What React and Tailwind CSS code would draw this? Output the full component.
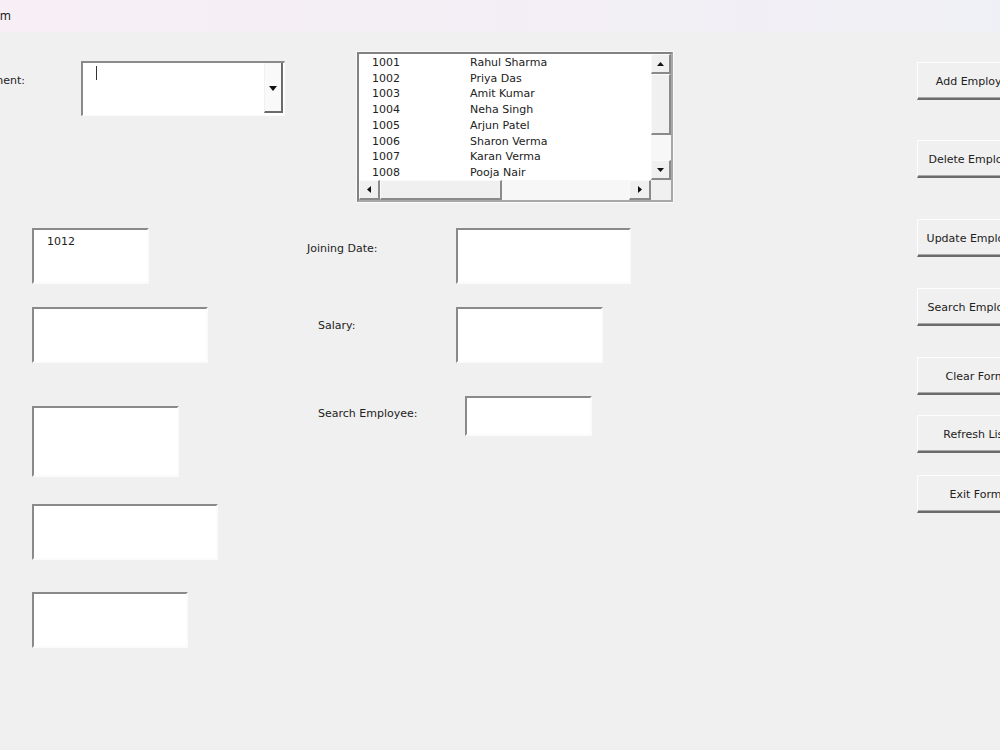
import React from "react";

const font = { fontFamily: '"DejaVu Sans", "Liberation Sans", sans-serif' };

function TextBox({ w, h, children, className = "" }) {
  return (
    <div
      className={`bg-white border-t-2 border-l-2 border-t-[#8a8a8a] border-l-[#8a8a8a] border-b-2 border-r-2 border-b-[#fbfbfb] border-r-[#fbfbfb] shrink-0 ${className}`}
      style={{ width: w, height: h }}
    >
      {children}
    </div>
  );
}

function Btn({ label, mt }) {
  return (
    <div
      className="w-[116px] h-[38px] shrink-0 flex items-center justify-center pt-[3px] bg-[#f0f0f0] border-t border-l border-t-[#fdfdfd] border-l-[#fdfdfd] border-b-2 border-r-2 border-b-[#6b6b6b] border-r-[#6b6b6b] shadow-[inset_-1px_-1px_0_#a8a8a8] text-[11px] text-[#222] whitespace-nowrap"
      style={{ marginTop: mt }}
    >
      <span className="pl-[2px]">{label}</span>
    </div>
  );
}

function ScrollBtn({ children, className = "" }) {
  return (
    <div
      className={`bg-[#f0f0f0] border-t border-l border-t-[#fafafa] border-l-[#fafafa] border-b-2 border-r-2 border-b-[#8a8a8a] border-r-[#8a8a8a] flex items-center justify-center shrink-0 ${className}`}
    >
      {children}
    </div>
  );
}

const Up = () => (
  <svg width="7" height="4" viewBox="0 0 7 4"><path d="M0 4 L3.5 0 L7 4 Z" fill="#111" /></svg>
);
const Down = () => (
  <svg width="7" height="4" viewBox="0 0 7 4"><path d="M0 0 L3.5 4 L7 0 Z" fill="#111" /></svg>
);
const Left = () => (
  <svg width="4" height="7" viewBox="0 0 4 7"><path d="M4 0 L0 3.5 L4 7 Z" fill="#111" /></svg>
);
const Right = () => (
  <svg width="4" height="7" viewBox="0 0 4 7"><path d="M0 0 L4 3.5 L0 7 Z" fill="#111" /></svg>
);

const employees = [
  ["1001", "Rahul Sharma"],
  ["1002", "Priya Das"],
  ["1003", "Amit Kumar"],
  ["1004", "Neha Singh"],
  ["1005", "Arjun Patel"],
  ["1006", "Sharon Verma"],
  ["1007", "Karan Verma"],
  ["1008", "Pooja Nair"],
];

export default function App() {
  return (
    <div
      className="w-[1000px] h-[750px] overflow-hidden bg-[#f0f0f0] flex flex-col text-[#222]"
      style={font}
    >
      {/* Title bar */}
      <div className="h-[32px] shrink-0 bg-gradient-to-r from-[#f8eff6] via-[#f3eef5] to-[#eff0f5] flex items-center">
        <div className="w-[11px] overflow-hidden flex justify-end">
          <span className="whitespace-nowrap text-[12px] text-[#1f1f1f]" style={{ fontFamily: '"Noto Sans", "DejaVu Sans", sans-serif' }}>
            Employee Form
          </span>
        </div>
      </div>

      <div className="flex flex-1">
        {/* Main form area */}
        <div className="w-[917px] shrink-0 flex flex-col">
          {/* Row A */}
          <div className="flex items-start">
            <div className="w-[25px] overflow-hidden flex justify-end mt-[42px] shrink-0">
              <span className="whitespace-nowrap text-[11px] leading-[14px]">Department:</span>
            </div>
            {/* Combo box */}
            <div className="ml-[56px] mt-[29px] w-[204px] h-[55px] shrink-0 flex bg-white border-t-2 border-l-2 border-t-[#8a8a8a] border-l-[#8a8a8a] border-b border-r border-b-[#fbfbfb] border-r-[#fbfbfb]">
              <div className="flex-1 relative">
                <div className="absolute left-[13px] top-[3px] w-px h-[14px] bg-[#333]" />
              </div>
              <div className="w-[19px] mr-px mb-[2px] bg-[#f9f9f9] border-l border-l-[#f0f0f0] border-b-2 border-r-2 border-b-[#6b6b6b] border-r-[#6b6b6b] flex items-center justify-center pt-[3px]">
                <svg width="8" height="5" viewBox="0 0 8 5"><path d="M0 0 L4 5 L8 0 Z" fill="#111" /></svg>
              </div>
            </div>
            {/* List box */}
            <div className="ml-[72px] mt-[20px] w-[316px] h-[150px] shrink-0 bg-white border-2 border-t-[#828282] border-l-[#828282] border-b-[#a8a8a8] border-r-[#a8a8a8] shadow-[0_0_0_1px_#fafafa] flex flex-col">
              <div className="flex h-[126px]">
                <div className="flex-1 overflow-hidden pl-[13px] pt-[1px] text-[11px] leading-[15.7px] text-[#222]">
                  {employees.map(([id, name]) => (
                    <div key={id} className="flex whitespace-nowrap">
                      <span className="w-[98px]">{id}</span>
                      <span>{name}</span>
                    </div>
                  ))}
                </div>
                <div className="w-[20px] flex flex-col bg-[#f7f7f7]">
                  <ScrollBtn className="h-[20px]"><Up /></ScrollBtn>
                  <ScrollBtn className="h-[61px]" />
                  <div className="flex-1" />
                  <ScrollBtn className="h-[20px]"><Down /></ScrollBtn>
                </div>
              </div>
              <div className="flex h-[20px]">
                <div className="flex-1 flex bg-[#f7f7f7]">
                  <ScrollBtn className="w-[21px]"><Left /></ScrollBtn>
                  <ScrollBtn className="w-[122px]" />
                  <div className="flex-1" />
                  <ScrollBtn className="w-[22px]"><Right /></ScrollBtn>
                </div>
                <div className="w-[20px] bg-[#f0f0f0]" />
              </div>
            </div>
          </div>

          {/* Row B */}
          <div className="flex mt-[26px]">
            <div className="ml-[32px] w-[275px] shrink-0 flex flex-col">
              <TextBox w={117} h={56}>
                <div className="pl-[13px] pt-[5px] text-[11px] leading-[14px]">1012</div>
              </TextBox>
              <TextBox w={176} h={56} className="mt-[23px]" />
              <TextBox w={147} h={71} className="mt-[43px]" />
              <TextBox w={186} h={56} className="mt-[27px]" />
              <TextBox w={156} h={56} className="mt-[32px]" />
            </div>
            <div className="flex flex-col">
              <div className="flex items-start">
                <div className="w-[149px] pt-[14px] text-[11px] leading-[14px] whitespace-nowrap">Joining Date:</div>
                <TextBox w={175} h={56} />
              </div>
              <div className="flex items-start mt-[23px]">
                <div className="w-[149px] pl-[11px] pt-[12px] text-[11px] leading-[14px] whitespace-nowrap">Salary:</div>
                <TextBox w={147} h={56} />
              </div>
              <div className="flex items-start mt-[33px]">
                <div className="w-[158px] pl-[11px] pt-[11px] text-[11px] leading-[14px] whitespace-nowrap">Search Employee:</div>
                <TextBox w={127} h={40} />
              </div>
            </div>
          </div>
        </div>

        {/* Buttons column */}
        <div className="flex flex-col">
          <Btn label="Add Employee" mt={30} />
          <Btn label="Delete Employee" mt={40} />
          <Btn label="Update Employee" mt={41} />
          <Btn label="Search Employee" mt={31} />
          <Btn label="Clear Form" mt={31} />
          <Btn label="Refresh List" mt={20} />
          <Btn label="Exit Form" mt={22} />
        </div>
      </div>
    </div>
  );
}
